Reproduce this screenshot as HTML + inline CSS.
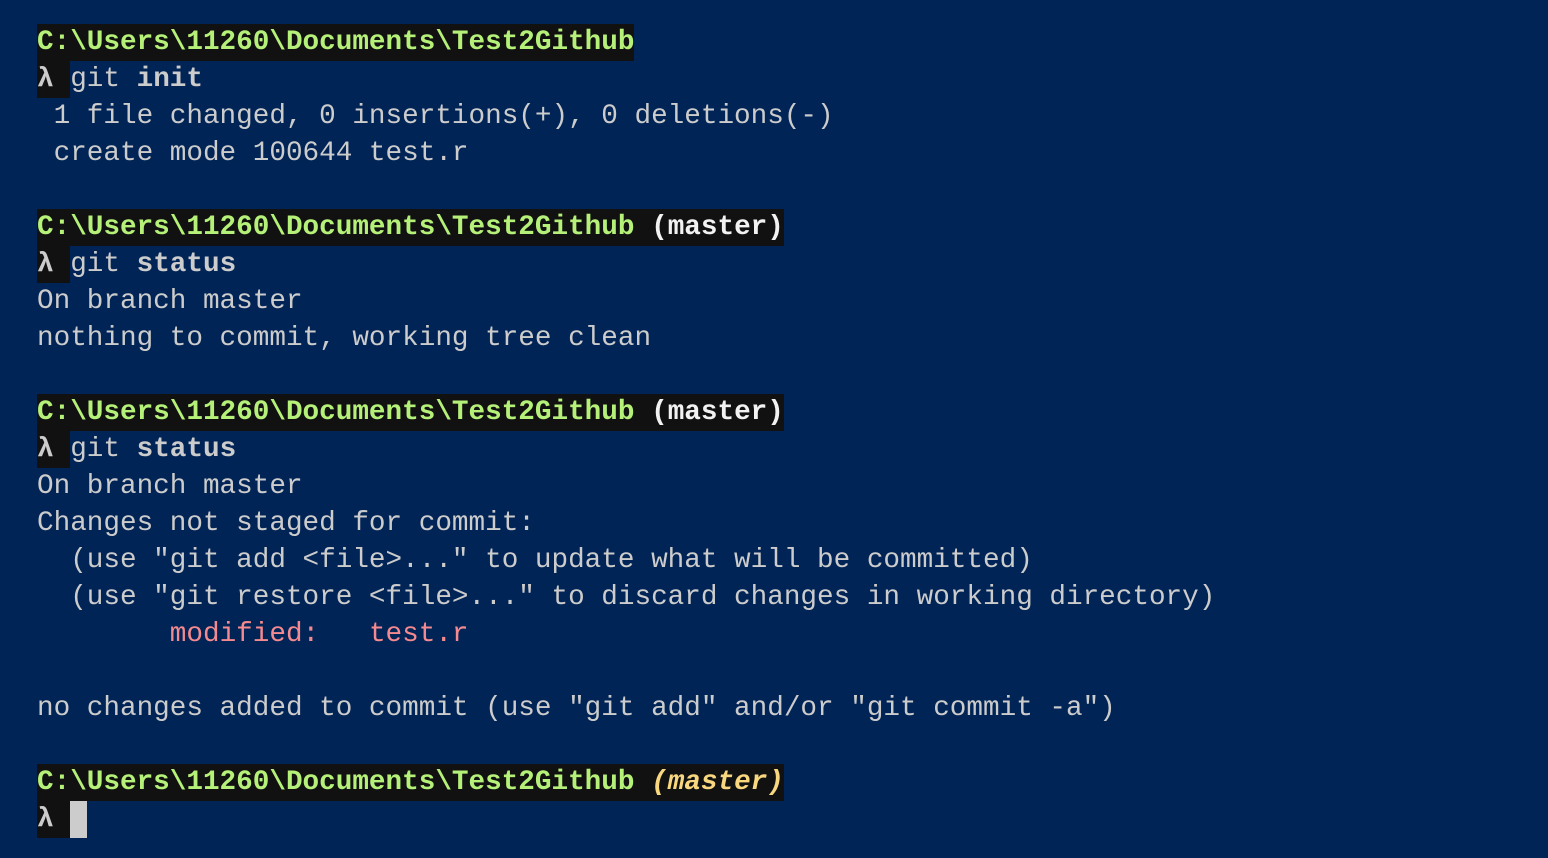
<!DOCTYPE html>
<html><head><meta charset="utf-8"><style>
html,body{margin:0;padding:0;background:#012456;width:1548px;height:858px;overflow:hidden}
.t{position:absolute;left:37px;top:24px;font-family:"Liberation Mono","DejaVu Sans Mono",monospace;font-size:27.67px;line-height:37px;color:#cccccc;letter-spacing:0}
.l{height:37px;white-space:pre}
.p{background:#111111;display:inline-block;height:37px}
.g{color:#b5f078;font-weight:bold}
.w{color:#f2f2f2;font-weight:bold}
.y{color:#f9d77e;font-weight:bold;font-style:italic}
.b{font-weight:bold}
.r{color:#f48a8f}
.cur{display:inline-block;width:17px;height:37px;background:#cccccc;vertical-align:top}
</style></head><body>
<div class="t"><div class="l"><span class="p"><span class="g">C:\Users\11260\Documents\Test2Github</span></span></div><div class="l"><span class="p b">λ </span>git <span class="b">init</span></div><div class="l"> 1 file changed, 0 insertions(+), 0 deletions(-)</div><div class="l"> create mode 100644 test.r</div><div class="l"></div><div class="l"><span class="p"><span class="g">C:\Users\11260\Documents\Test2Github</span> <span class="w">(master)</span></span></div><div class="l"><span class="p b">λ </span>git <span class="b">status</span></div><div class="l">On branch master</div><div class="l">nothing to commit, working tree clean</div><div class="l"></div><div class="l"><span class="p"><span class="g">C:\Users\11260\Documents\Test2Github</span> <span class="w">(master)</span></span></div><div class="l"><span class="p b">λ </span>git <span class="b">status</span></div><div class="l">On branch master</div><div class="l">Changes not staged for commit:</div><div class="l">  (use "git add &lt;file&gt;..." to update what will be committed)</div><div class="l">  (use "git restore &lt;file&gt;..." to discard changes in working directory)</div><div class="l">        <span class="r">modified:   test.r</span></div><div class="l"></div><div class="l">no changes added to commit (use "git add" and/or "git commit -a")</div><div class="l"></div><div class="l"><span class="p"><span class="g">C:\Users\11260\Documents\Test2Github</span> <span class="y">(master)</span></span></div><div class="l"><span class="p b">λ </span><span class="cur"></span></div></div>
</body></html>
